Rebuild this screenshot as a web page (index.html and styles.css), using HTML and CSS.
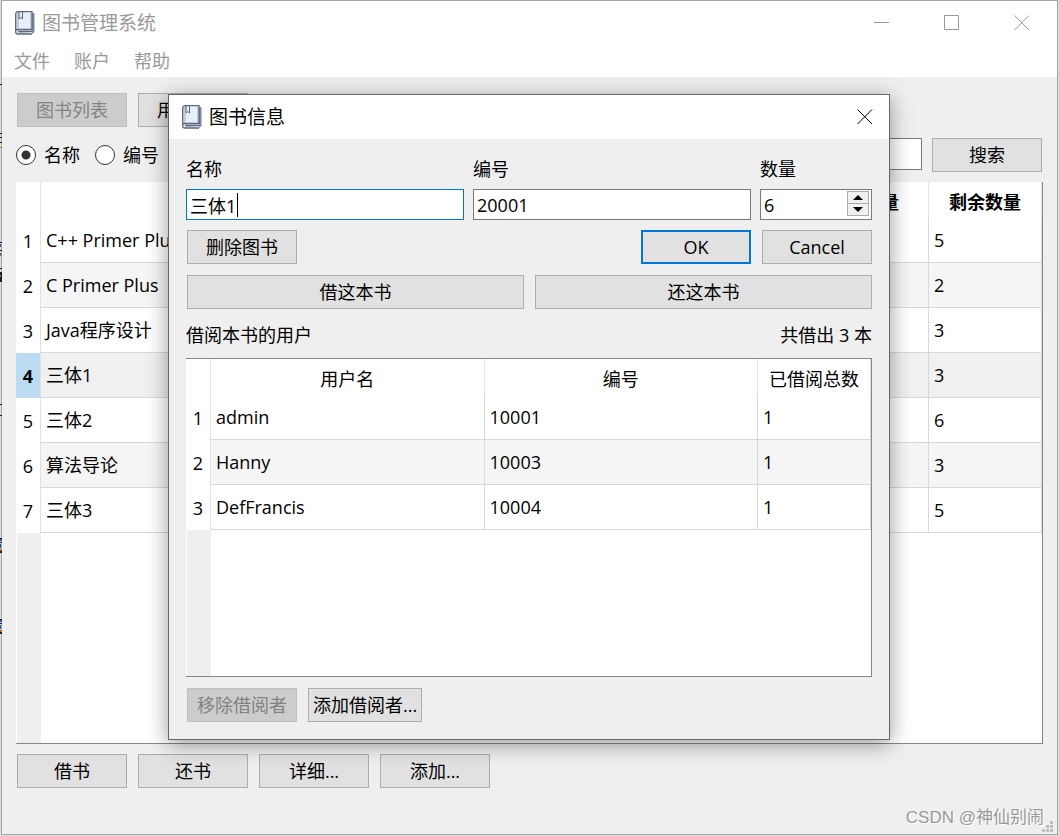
FILE: index.html
```html
<!DOCTYPE html>
<html lang="zh-CN">
<head>
<meta charset="utf-8">
<title>图书管理系统</title>
<link rel="stylesheet" href="styles.css">
</head>
<body>
<svg class="symbols" width="0" height="0" aria-hidden="true">
  <symbol id="book" viewBox="0 0 20 24">
    <path d="M17 2h2.500v19L17 23z" fill="#7e8a9f"/>
    <path d="M1.500 20V3a2 2 0 0 1 2-2H17v19H3.500v2.500H17" fill="#c9ccd1"/>
    <path d="M4 1h13v17H4z" fill="#e6effc"/>
    <path d="M15 2h1.500v16H15z" fill="#c9ccd1"/>
    <path d="M17 23H3a2.300 2.300 0 0 1-2.300-2.300V3A2.300 2.300 0 0 1 3 .700h14v17.600H3a2.300 2.300 0 0 0-2.300 2.300M3 20.500h14" fill="none" stroke="#5b6880" stroke-width="1.300"/>
    <path d="M4 1v7l1.700-1.500L7.500 8V1" fill="none" stroke="#5b6880" stroke-width="1"/>
  </symbol>
</svg>

<main class="window">
  <header class="titlebar">
    <svg class="book" aria-hidden="true"><use href="#book"/></svg>
    <h1 class="title">图书管理系统</h1>
    <div class="controls">
      <button class="control" aria-label="最小化"><svg class="glyph" viewBox="0 0 16 16"><path d="M0 7.500h15"/></svg></button>
      <button class="control" aria-label="最大化"><svg class="glyph" viewBox="0 0 16 16"><path d="M.500.500h14v14H.500z"/></svg></button>
      <button class="control" aria-label="关闭"><svg class="glyph" viewBox="0 0 16 16"><path d="M.500.500l14.500 14.500M15 .500L.500 15"/></svg></button>
    </div>
  </header>
  <nav class="menubar">
    <button class="menu">文件</button>
    <button class="menu">账户</button>
    <button class="menu">帮助</button>
  </nav>
  <div class="content">
    <div class="row tabs">
      <button class="btn" disabled>图书列表</button>
      <button class="btn">用户列表</button>
    </div>
    <div class="search">
      <label class="choice"><input class="radio" type="radio" name="by" checked>名称</label>
      <label class="choice"><input class="radio" type="radio" name="by">编号</label>
      <input class="textbox search-box" type="text" aria-label="搜索内容">
      <button class="btn">搜索</button>
    </div>
    <div class="table-frame">
      <table class="grid books">
        <colgroup><col class="num"><col><col class="qty"><col class="qty"></colgroup>
        <thead><tr><th></th><th>名称</th><th>总数量</th><th>剩余数量</th></tr></thead>
        <tbody>
          <tr><th scope="row">1</th><td>C++ Primer Plus</td><td></td><td>5</td></tr>
          <tr><th scope="row">2</th><td>C Primer Plus</td><td></td><td>2</td></tr>
          <tr><th scope="row">3</th><td>Java程序设计</td><td></td><td>3</td></tr>
          <tr class="selected"><th scope="row">4</th><td>三体1</td><td></td><td>3</td></tr>
          <tr><th scope="row">5</th><td>三体2</td><td></td><td>6</td></tr>
          <tr><th scope="row">6</th><td>算法导论</td><td></td><td>3</td></tr>
          <tr><th scope="row">7</th><td>三体3</td><td></td><td>5</td></tr>
        </tbody>
      </table>
    </div>
    <div class="row">
      <button class="btn">借书</button>
      <button class="btn">还书</button>
      <button class="btn">详细...</button>
      <button class="btn">添加...</button>
    </div>
  </div>
  <svg class="grip" viewBox="0 0 11 11" aria-hidden="true"><path d="M8 0h3v3H8zM4 4h3v3H4zM8 4h3v3H8zM0 8h3v3H0zM4 8h3v3H4zM8 8h3v3H8z" fill="#bdbdbd"/></svg>
</main>

<svg class="backdrop-edge" viewBox="0 0 2 836" aria-hidden="true">
  <path d="M0 84h2v1H0zM0 133h2v1H0zM0 137h2v1H0zM0 142h2v1H0zM0 242h2v1H0zM0 250h2v1H0zM0 268h2v1H0zM0 272h2v10H0zM0 404h2v1H0zM0 415h2v1H0zM0 538h2v1H0zM0 542h2v1H0zM0 551h2v2H0zM0 619h2v1H0zM0 623h2v1H0zM0 632h2v2H0z" fill="#1c1c2c"/>
  <path d="M0 244h1v3H0zM0 253h1v2H0zM0 539h2v2H0zM0 544h1v4H0zM0 620h2v2H0zM0 625h1v4H0z" fill="#2d4fae"/>
  <path d="M0 147h2v1H0zM0 255h2v1H0zM0 275h1v2H0zM0 549h2v2H0zM0 630h2v2H0z" fill="#b8702c"/>
</svg>

<section class="dialog" role="dialog" aria-labelledby="dialog-title">
  <header class="titlebar dialog-bar">
    <svg class="book" aria-hidden="true"><use href="#book"/></svg>
    <h2 class="title" id="dialog-title">图书信息</h2>
    <button class="control dialog-close" aria-label="关闭"><svg class="glyph" viewBox="0 0 16 16"><path d="M.500.500l14.500 14.500M15 .500L.500 15"/></svg></button>
  </header>
  <div class="dialog-body">
    <div class="fields">
      <div class="field">
        <label for="name">名称</label>
        <div class="entry"><input class="textbox active" id="name" type="text" value="三体1"><span class="caret"></span></div>
      </div>
      <div class="field">
        <label for="code">编号</label>
        <input class="textbox" id="code" type="text" value="20001">
      </div>
      <div class="field">
        <label for="count">数量</label>
        <div class="entry">
          <input class="textbox" id="count" type="number" value="6">
          <div class="spinner">
            <button class="step" aria-label="增加"><svg class="arrow" viewBox="0 0 10 5"><path d="M0 5l5-5 5 5z"/></svg></button>
            <button class="step" aria-label="减少"><svg class="arrow" viewBox="0 0 10 5"><path d="M0 0l5 5 5-5z"/></svg></button>
          </div>
        </div>
      </div>
    </div>
    <div class="row actions">
      <button class="btn">删除图书</button>
      <button class="btn default push">OK</button>
      <button class="btn">Cancel</button>
    </div>
    <div class="row wide">
      <button class="btn">借这本书</button>
      <button class="btn">还这本书</button>
    </div>
    <div class="caption"><span>借阅本书的用户</span><span>共借出 3 本</span></div>
    <div class="table-frame users-frame">
      <table class="grid users">
        <colgroup><col class="num"><col><col><col class="qty"></colgroup>
        <thead><tr><th></th><th>用户名</th><th>编号</th><th>已借阅总数</th></tr></thead>
        <tbody>
          <tr><th scope="row">1</th><td>admin</td><td>10001</td><td>1</td></tr>
          <tr><th scope="row">2</th><td>Hanny</td><td>10003</td><td>1</td></tr>
          <tr><th scope="row">3</th><td>DefFrancis</td><td>10004</td><td>1</td></tr>
        </tbody>
      </table>
    </div>
    <div class="row">
      <button class="btn" disabled>移除借阅者</button>
      <button class="btn snug">添加借阅者...</button>
    </div>
  </div>
</section>

<div class="watermark">CSDN @神仙别闹</div>
</body>
</html>
```
FILE: styles.css
```css
* { box-sizing: border-box; }

body {
  margin: 0;
  position: relative;
  min-height: 100vh;
  display: flex;
  padding: 0 1px 1px;
  background: #dcdcdc;
  color: #000;
  font: 18px/22px "Open Sans", "Noto Sans CJK SC", sans-serif;
}

button, input { font: inherit; color: inherit; margin: 0; }

.symbols { position: absolute; }

.window {
  flex: 1;
  position: relative;
  display: flex;
  flex-direction: column;
  border: 1px solid #a6a6a6;
  background: #efefef;
}

.titlebar {
  display: flex;
  align-items: center;
  height: 44px;
  padding-left: 13px;
  background: #fff;
  color: #999;
}

.book { width: 20px; height: 24px; margin-right: 7px; }

.title { margin: 0; font-size: 19px; font-weight: 400; }

.controls { display: flex; margin-left: auto; }

.control {
  width: 70px;
  height: 42px;
  padding: 0;
  border: 0;
  background: none;
}

.glyph {
  display: block;
  width: 16px;
  height: 16px;
  margin: auto;
  fill: none;
  stroke: currentColor;
}

.menubar {
  display: flex;
  gap: 24px;
  height: 32px;
  padding: 0 12px;
  background: #fff;
  color: #999;
}

.menu { padding: 0; border: 0; background: none; }

.content {
  flex: 1;
  display: flex;
  flex-direction: column;
  padding: 16px 14px 46px;
}

.row { display: flex; gap: 11px; padding-left: 1px; }
.tabs { margin-bottom: 11px; }

.btn {
  min-width: 110px;
  height: 34px;
  padding: 0 8px;
  border: 1px solid #adadad;
  background: #e1e1e1;
}
.btn:disabled { border-color: #bfbfbf; background: #ccc; color: #838383; }
.btn.default { border: 2px solid #0078d7; }
.btn.push { margin-left: auto; }
.btn.snug { padding: 0 4px; }

.search { display: flex; gap: 10px; margin-bottom: 10px; padding-right: 1px; }

.choice { display: flex; align-items: center; gap: 8px; height: 34px; margin-right: 5px; }

.radio {
  appearance: none;
  width: 20px;
  height: 20px;
  border: 1px solid #333;
  border-radius: 50%;
  background: #fff;
}
.radio:checked { background: radial-gradient(circle, #333 0 4px, #fff 5px); }

.textbox {
  display: block;
  width: 100%;
  min-width: 0;
  height: 31px;
  padding: 0 3px;
  border: 1px solid #7a7a7a;
  border-radius: 0;
  background: #fff;
  outline: none;
  appearance: textfield;
}
.textbox::-webkit-inner-spin-button { appearance: none; margin: 0; }
.textbox.active { border-color: #0078d7; }
.search-box { flex: 1; height: 32px; }

.table-frame {
  flex: 1;
  margin-bottom: 10px;
  border: solid #828790;
  border-width: 0 1px 1px 0;
  background: linear-gradient(to right, #fff 1px, #efefef 1px 25px, #fff 25px);
}

.grid {
  width: 100%;
  table-layout: fixed;
  border-collapse: separate;
  border-spacing: 0;
  background: #fff;
}
.grid .num { width: 25px; }
.grid .qty { width: 113px; }

.grid th, .grid td { padding: 0; border-right: 1px solid #d8d8d8; white-space: nowrap; }
.grid thead th { height: 36px; padding-top: 3px; border-color: #e5e5e5; }
.grid tbody th { padding-top: 1px; border-color: #e0e0e0; font-weight: 400; }
.grid td { height: 45px; padding-left: 5px; border-bottom: 1px solid #d8d8d8; }
.grid tr:nth-child(even) td { background: #f5f5f5; }
.grid .selected th { background: #bcdcf4; font-weight: 700; }
.grid tr.selected td { background: #f0f0f0; }

.grip { position: absolute; right: 4px; bottom: 2px; width: 11px; height: 11px; }

.backdrop-edge { position: absolute; left: 0; top: 0; width: 2px; height: 836px; }

.dialog {
  position: absolute;
  left: 168px;
  right: 169px;
  top: 94px;
  border: 1px solid #666;
  background: #efefef;
  box-shadow: 0 4px 20px rgba(0, 0, 0, .4);
}

.dialog-bar { color: #000; }
.dialog-close { width: 48px; margin-left: auto; }

.dialog-body { padding: 19px 17px 17px; }

.fields {
  display: grid;
  grid-template-columns: 1fr 1fr 112px;
  gap: 9px;
}
.field { display: grid; gap: 9px; min-width: 0; }
.entry { position: relative; }

.caret {
  position: absolute;
  left: 51px;
  top: 4px;
  width: 1px;
  height: 24px;
  background: #000;
}

.spinner {
  position: absolute;
  right: 3px;
  top: 2px;
  display: grid;
  width: 22px;
}
.step {
  height: 13px;
  padding: 0;
  border: 1px solid #acacac;
  background: #f0f0f0;
}
.step + .step { border-top: 0; height: 12px; }
.arrow { display: block; width: 10px; height: 5px; margin: auto; }

.actions { margin-top: 10px; }
.wide { margin: 11px 0 15px; }
.wide .btn { flex: 1; }

.caption { display: flex; justify-content: space-between; margin-bottom: 12px; }

.users-frame { min-height: 319px; margin-bottom: 11px; border-top-width: 1px; }
.users thead th { font-weight: 400; }

.watermark {
  position: absolute;
  right: 15px;
  bottom: 6px;
  color: #999;
  font: 17px/24px "Liberation Sans", "Noto Sans CJK SC", sans-serif;
  text-shadow: 1px 1px 0 #fff;
}
```
